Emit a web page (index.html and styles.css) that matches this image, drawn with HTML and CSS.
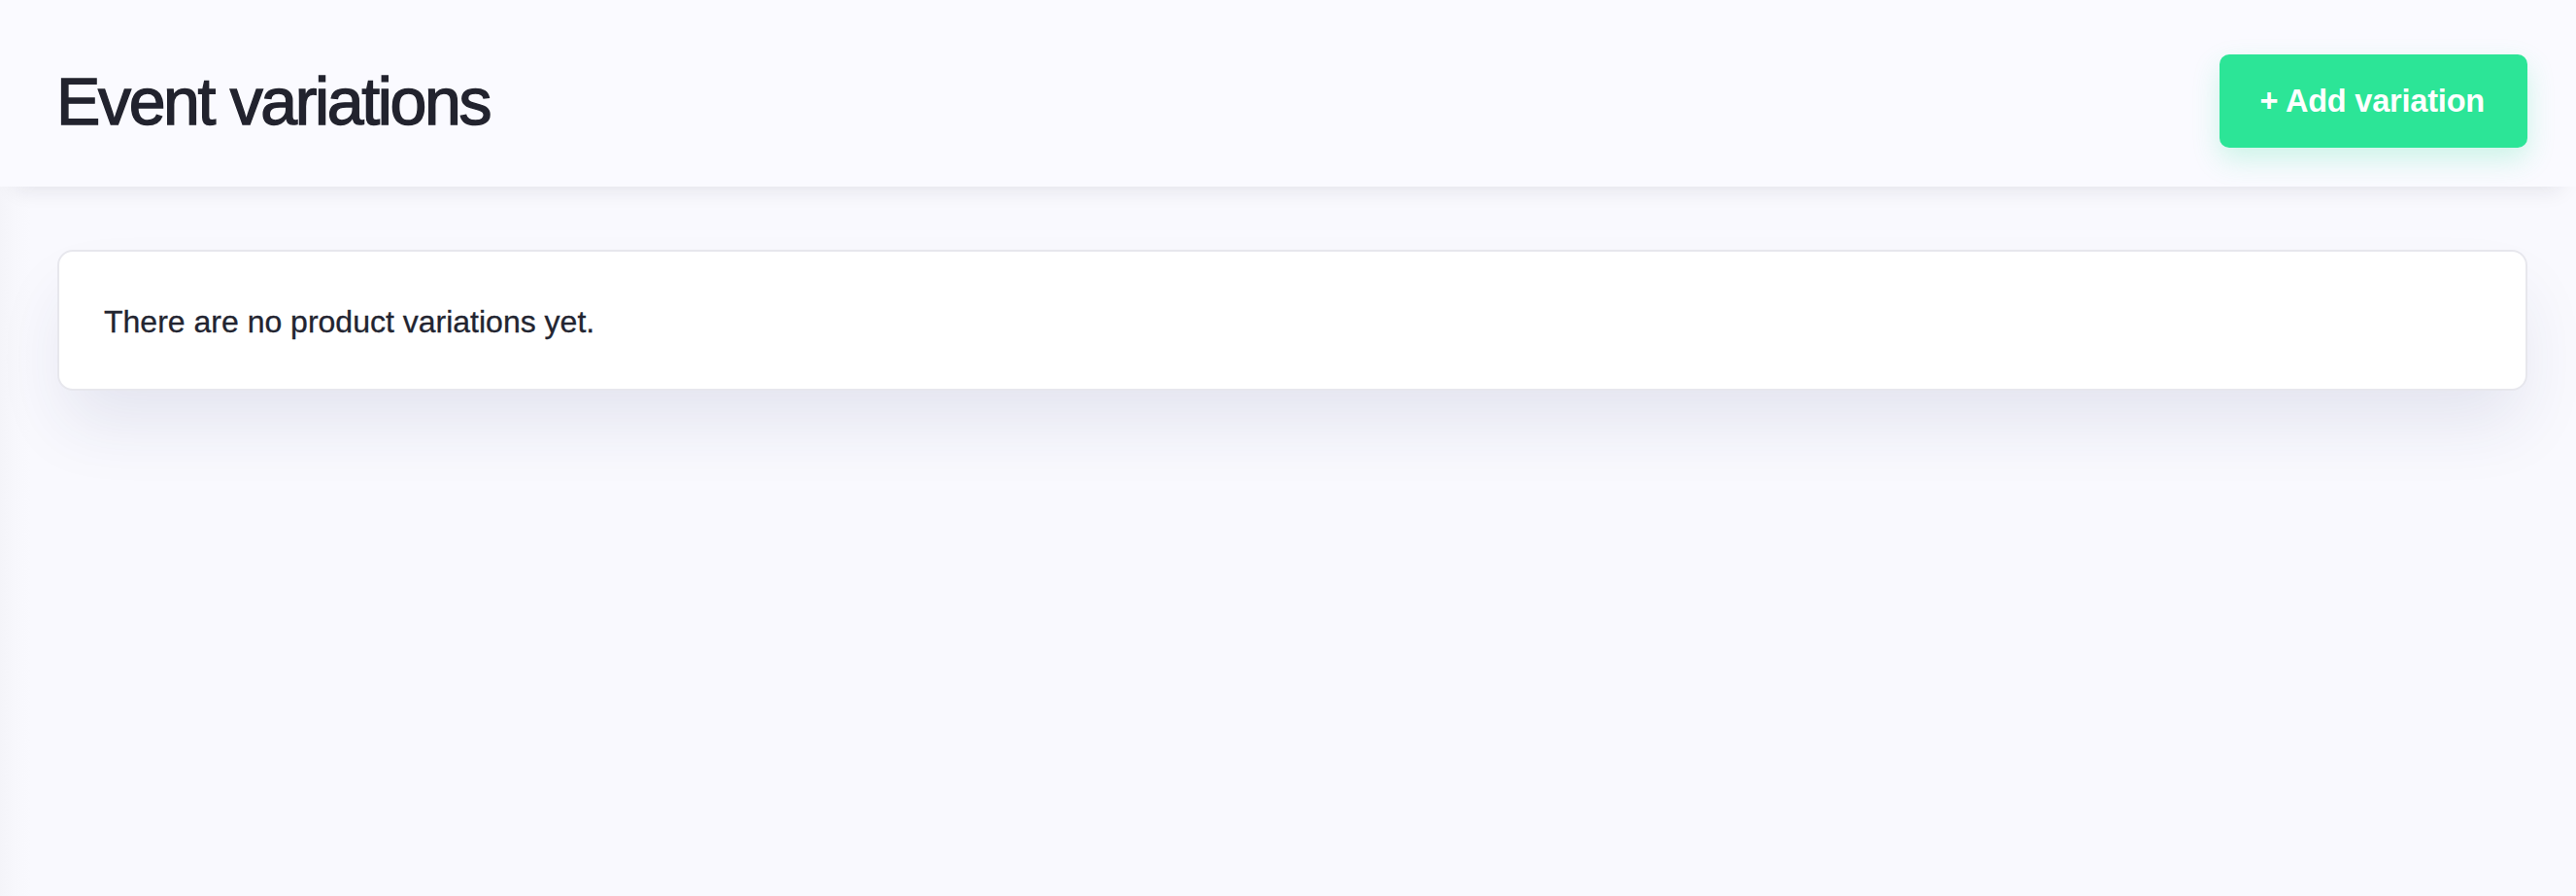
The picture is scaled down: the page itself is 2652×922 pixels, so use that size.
FILE: index.html
```html
<!DOCTYPE html>
<html lang="en">
<head>
<meta charset="utf-8">
<title>Event variations</title>
<link rel="stylesheet" href="styles.css">
</head>
<body>
<div class="page">
  <header class="page-header">
    <h1 class="page-title">Event variations</h1>
    <button class="btn-add" type="button">+ Add variation</button>
  </header>
  <main class="content">
    <section class="card">
      <p class="empty">There are no product variations yet.</p>
    </section>
  </main>
</div>
</body>
</html>
```
FILE: styles.css
```css
html, body {
  margin: 0;
  padding: 0;
}
body {
  background: #f9f9fe;
  font-family: "Liberation Sans", Arial, Helvetica, sans-serif;
  color: #22232e;
  min-height: 922px;
}
.page {
  min-height: 922px;
  background: linear-gradient(to right, #f4f4f9 0px, #f7f7fc 14px, #f9f9fe 32px);
}
.page-header {
  box-sizing: border-box;
  height: 192px;
  padding: 16px 50px 0 58px;
  display: flex;
  align-items: center;
  justify-content: space-between;
  background: #fafaff;
  box-shadow: 0 18px 22px -16px rgba(30, 30, 50, 0.11);
  position: relative;
}
.page-title {
  margin: 0;
  font-size: 68px;
  line-height: 68px;
  font-weight: 400;
  letter-spacing: -2.35px;
  -webkit-text-stroke: 1.4px #22232e;
  color: #22232e;
}
.btn-add {
  box-sizing: border-box;
  height: 96px;
  padding: 0 44px 0 42px;
  border: 0;
  border-radius: 10px;
  background: #2ce597;
  color: #ffffff;
  font-family: "Liberation Sans", Arial, Helvetica, sans-serif;
  font-size: 32.5px;
  font-weight: 700;
  letter-spacing: -0.2px;
  box-shadow: 0 12px 28px rgba(44, 229, 151, 0.22);
  display: inline-flex;
  align-items: center;
}
.content {
  padding: 65px 50px 0 59px;
}
.card {
  background: #ffffff;
  border: 2px solid #e7e7ed;
  border-radius: 16px;
  padding: 48px 46px 45px;
  box-shadow: 0 40px 70px -8px rgba(40, 50, 110, 0.10);
}
.empty {
  margin: 0;
  font-size: 32px;
  line-height: 48px;
  color: #222430;
  -webkit-text-stroke: 0.3px #222430;
}
```
